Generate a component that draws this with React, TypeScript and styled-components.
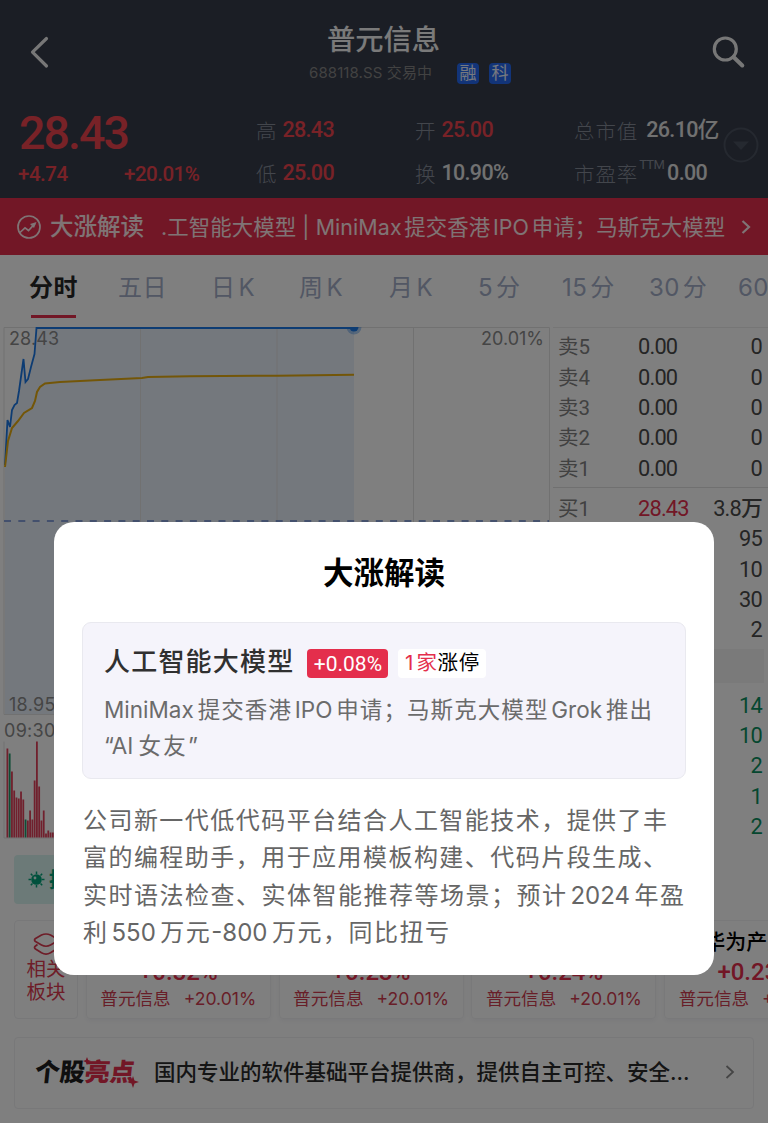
import React from 'react';
import styled, { createGlobalStyle, css } from 'styled-components';

const RED = '#e42e4c';
const GREEN = '#0a8f5e';

const GlobalStyle = createGlobalStyle`
  * { box-sizing: border-box; }
  body { margin: 0; background: #fff; }
  #root { font-family: Inter, 'Noto Sans CJK SC', sans-serif; }
`;

const Screen = styled.div`
  position: relative;
  width: 768px;
  height: 1124px;
  overflow: hidden;
  background: #fff;
  white-space: nowrap;
  text-autospace: normal;
`;

const Header = styled.header`
  height: 198px;
  background: #363c4a;
  color: #fff;
`;

const TitleBar = styled.div`
  display: flex;
  justify-content: space-between;
  height: 104px;
  padding: 0 22px 0 30px;
`;

const TitleIcon = styled.svg`
  flex: none;
  display: block;
  margin-top: 35px;
`;

const TitleBlock = styled.div`
  display: flex;
  flex-direction: column;
  align-items: center;
  padding-top: 20px;
  padding-left: 58px;
`;

const Title = styled.h1`
  margin: 0 53px 0 0;
  font-size: 28.3px;
  line-height: 40px;
  font-weight: 500;
  color: #f4f4f4;
`;

const SubTitle = styled.div`
  display: flex;
  align-items: center;
  height: 26px;
  font-size: 15px;
  line-height: 24px;
  color: #858585;
`;

const SubText = styled.span`
  width: 122px;
  margin-right: 26px;
  letter-spacing: 0.1px;
`;

const Tag = styled.span`
  width: 22px;
  height: 21px;
  margin-right: 10px;
  border-radius: 4px;
  background: #2468f2;
  color: #eef3ff;
  font-size: 17px;
  line-height: 20px;
  text-align: center;
  &:last-child { margin-right: 0; }
`;

const Quote = styled.section`
  display: grid;
  grid-template-columns: 237px 159px 159px 149px 1fr;
  padding-left: 19px;
  height: 94px;
`;

const digits = css`
  font-family: Roboto, 'Noto Sans CJK SC', sans-serif;
  font-weight: 500;
`;

const PriceCell = styled.div`
  ${digits}
  color: #f0444f;
`;

const Price = styled.div`
  margin-top: 1px;
  font-size: 46.5px;
  line-height: 56px;
  letter-spacing: -1.9px;
`;

const Change = styled.div`
  display: flex;
  margin-left: -1px;
  font-size: 20.5px;
  line-height: 26px;
  letter-spacing: -0.5px;
`;

const ChangeItem = styled.span<{ $w?: number }>`
  width: ${(p) => (p.$w ? p.$w + 'px' : 'auto')};
`;

const Facts = styled.div`
  display: flex;
  flex-direction: column;
`;

const Fact = styled.div<{ $tone?: string }>`
  ${digits}
  display: flex;
  align-items: center;
  height: 43.5px;
  padding-top: 8px;
  font-size: 21.5px;
  line-height: 26px;
  color: ${(p) => p.$tone || '#e2e2e2'};
  letter-spacing: -0.65px;
  text-autospace: no-autospace;
`;

const FactLabel = styled.span<{ $gap?: number }>`
  margin-right: ${(p) => p.$gap ?? 5}px;
  font-family: 'Noto Sans CJK SC', sans-serif;
  font-weight: 300;
  font-size: 20.5px;
  letter-spacing: 0.9px;
  color: #868c99;
`;

const Sup = styled.span`
  align-self: flex-start;
  margin: -4px 3px 0 -4px;
  font-size: 13px;
  font-weight: 400;
  letter-spacing: -0.7px;
  color: #868c99;
`;

const ExpandCell = styled.div`
  padding-top: 22px;
  svg { display: block; }
`;

const Banner = styled.div`
  display: flex;
  align-items: center;
  height: 57px;
  padding: 0 17px 0 17px;
  background: ${RED};
  color: #ffe8ea;
  line-height: 30px;
`;

const BannerTitle = styled.span`
  width: 111px;
  margin-left: 9px;
  font-size: 23.5px;
  font-weight: 500;
`;

const BannerText = styled.span`
  flex: 1;
  font-size: 21.4px;
  letter-spacing: 0.1px;
`;

const Tabs = styled.nav`
  display: flex;
  height: 72px;
  padding-left: 29px;
  overflow: hidden;
`;

const Tab = styled.div<{ $w: number; $active?: boolean }>`
  flex: none;
  width: ${(p) => p.$w}px;
  height: 63px;
  font-size: 24px;
  line-height: 65px;
  letter-spacing: 0.4px;
  color: ${(p) => (p.$active ? '#262626' : '#a4aec8')};
  font-weight: ${(p) => (p.$active ? 600 : 400)};
  &::after {
    content: '';
    display: ${(p) => (p.$active ? 'block' : 'none')};
    width: 45px;
    height: 3px;
    margin: -5px 0 0 2px;
    background: ${RED};
  }
`;

const Market = styled.section`
  display: flex;
  height: 519px;
`;

const ChartPane = styled.div`
  width: 553px;
  svg { display: block; }
`;

const Book = styled.div`
  flex: 1;
  border-top: 1px solid #ececec;
  padding: 4px 6px 0 5px;
`;

const BookRow = styled.div<{ $tone?: string }>`
  ${digits}
  display: grid;
  grid-template-columns: 80px 1fr auto;
  align-items: center;
  height: 30.35px;
  font-size: 21.8px;
  line-height: 30px;
  font-weight: 450;
  letter-spacing: -0.8px;
  color: ${(p) => p.$tone || '#4a4a4a'};
  text-autospace: no-autospace;
`;

const BookLabel = styled.span`
  color: #828282;
  font-size: 20.5px;
  font-weight: 400;
  letter-spacing: 0;
`;

const BookPrice = styled.span<{ $up?: boolean }>`
  color: ${(p) => (p.$up ? RED : 'inherit')};
`;

const BookSplit = styled.div`
  height: 1px;
  margin: 3px -6px 6px -5px;
  background: #e0e0e0;
`;

const BookStrip = styled.div`
  height: 34px;
  margin: 4px -2px 7px -5px;
  background: #f5f5f5;
`;

const TipBar = styled.div`
  display: flex;
  align-items: center;
  width: 640px;
  height: 49px;
  margin: 9px 0 0 14px;
  padding-left: 14px;
  gap: 4px;
  border-radius: 4px;
  background: #d9f5f0;
  color: #00a37a;
  font-size: 21px;
  line-height: 30px;
  font-weight: 700;
`;

const Plates = styled.section`
  display: flex;
  gap: 7.8px;
  margin: 16px 0 0 14px;
  overflow: hidden;
  height: 106px;
`;

const PlateLead = styled.div`
  flex: none;
  width: 64px;
  height: 99px;
  padding-top: 11px;
  border: 1px solid #f0f0f2;
  border-radius: 4px;
  text-align: center;
  font-size: 19.5px;
  line-height: 23px;
  color: #dc3a50;
  svg { display: block; margin: 0 auto 2px; }
`;

const Plate = styled.div`
  flex: none;
  display: flex;
  flex-direction: column;
  align-items: center;
  width: 185px;
  height: 99px;
  border: 1px solid #f2f2f5;
  border-radius: 4px;
  box-shadow: 0 2px 5px rgba(60, 60, 120, 0.06);
  color: ${RED};
`;

const PlateName = styled.div`
  height: 34px;
  padding-top: 6px;
  font-size: 21px;
  line-height: 30px;
  font-weight: 500;
  color: #000;
`;

const PlateRate = styled.div`
  ${digits}
  height: 33px;
  font-size: 24px;
  line-height: 34px;
`;

const PlateStock = styled.div`
  display: flex;
  gap: 13px;
  font-size: 17.6px;
  line-height: 22px;
  color: #d13d50;
`;

const Highlight = styled.section`
  display: flex;
  align-items: center;
  width: 740px;
  height: 72px;
  margin: 11px 0 0 14px;
  padding: 0 18px 2px 20px;
  border: 1px solid #f0f0f2;
  border-radius: 4px;
`;

const HighlightLogo = styled.div`
  position: relative;
  width: 119px;
  font-size: 25px;
  line-height: 36px;
  font-weight: 900;
  color: #1e1e1e;
  span {
    display: inline-block;
    transform: skewX(-6deg);
  }
  em { font-style: normal; color: ${RED}; }
  svg { position: absolute; left: 0; top: 0; }
`;

const HighlightText = styled.span`
  flex: 1;
  font-size: 21.5px;
  line-height: 30px;
  font-weight: 500;
  color: #2b2b2b;
`;

const Mask = styled.div`
  position: absolute;
  inset: 0 0 1px 0;
  background: rgba(0, 0, 0, 0.5);
`;

const Dialog = styled.div`
  position: absolute;
  left: 54px;
  top: 522px;
  width: 660px;
  height: 453px;
  padding: 0 28px;
  border-radius: 20px;
  background: #fff;
`;

const DialogTitle = styled.h2`
  margin: 0;
  padding-top: 29px;
  height: 100px;
  font-size: 30.5px;
  line-height: 44px;
  font-weight: 600;
  text-align: center;
  color: #000;
`;

const Topic = styled.div`
  height: 157px;
  padding: 21px 21px 0;
  border: 1px solid #e9e9ef;
  border-radius: 9px;
  background: #f5f4fb;
`;

const TopicHead = styled.div`
  display: flex;
  align-items: center;
  height: 38px;
  color: #303030;
  font-size: 26px;
  line-height: 34px;
  font-weight: 500;
  letter-spacing: 1.2px;
`;

const TopicName = styled.span`
  height: 36px;
`;

const Rate = styled.span`
  ${digits}
  width: 81px;
  height: 29px;
  margin: 0 10px 0 13px;
  border-radius: 4px;
  background: ${RED};
  color: #fff;
  font-size: 21px;
  font-weight: 450;
  line-height: 30px;
  letter-spacing: 0;
  text-align: center;
`;

const LimitUp = styled.span`
  width: 88px;
  height: 29px;
  border-radius: 4px;
  background: #fff;
  color: #000;
  font-size: 20.5px;
  font-weight: 400;
  line-height: 28px;
  letter-spacing: 0.6px;
  text-align: center;
  em { font-style: normal; color: ${RED}; }
`;

const TopicText = styled.div`
  margin-top: 10px;
  color: #6b6b6b;
`;

const Line = styled.div<{ $w: number; $size: number; $lh: number }>`
  width: ${(p) => p.$w}px;
  height: ${(p) => p.$lh}px;
  font-size: ${(p) => p.$size}px;
  line-height: ${(p) => p.$lh}px;
  white-space: normal;
  text-align: justify;
  text-align-last: justify;
`;

const Reason = styled.div`
  margin: 23px 0 0 1px;
  color: #666;
`;

const sells = ['卖5', '卖4', '卖3', '卖2', '卖1'];
const buys = ['95', '10', '30', '2'];
const deals = ['14', '10', '2', '1', '2'];
const tabs: [string, number][] = [
  ['分时', 89], ['五日', 93], ['日K', 88], ['周K', 90], ['月K', 89],
  ['5分', 84], ['15分', 87], ['30分', 89], ['60分', 80],
];
const plates = [
  { name: '', rate: '+0.32%' },
  { name: '', rate: '+0.23%' },
  { name: '', rate: '+0.24%' },
  { name: '华为产业链', rate: '+0.23%' },
];
/* height of each volume bar and whether it closed down */
const volumes: [number, boolean][] = [
  [89, false], [84, true], [66, false], [47, false], [40, false], [39, false], [46, false],
  [38, false], [18, true], [17, false], [27, false], [18, false], [57, false], [96, false],
  [51, false], [17, false], [27, false], [4, false], [7, false], [5, false], [5, false],
  [4, false], [6, false],
];

const TrendChart = () => (
  <svg width="553" height="519" viewBox="0 327 553 519">
    <path
      d="M5 467V465L7.500 420L10 427L12 410L14.500 405L17 403L19 391L23.500 359L25.500 382L28 379L31 367L34.500 354L36.500 328H354V714H5Z"
      fill="#8fb4e6" fillOpacity=".2"
    />
    <path d="M4 327.500H549.500V714.500H4ZM140.500 327V714M277 327V714M413.500 327V714M4 741.500V838H549.500V741.500" fill="none" stroke="#e2e2e2" />
    <path d="M4 521H549" stroke="#6686d0" strokeWidth="1.700" strokeDasharray="7 7.300" />
    <text x="9" y="344.500" fontSize="18" letterSpacing=".1" fill="#8a8a8a">28.43</text>
    <text x="544" y="344.500" fontSize="18" fill="#8a8a8a" textAnchor="end">20.01%</text>
    <text x="9" y="710.500" fontSize="18" letterSpacing=".3" fill="#8a8a8a">18.95</text>
    <text x="4" y="737" fontSize="18" letterSpacing=".3" fill="#8a8a8a">09:30</text>
    <path
      d="M5 465L7.500 420L10 427L12 410L14.500 405L17 403L19 391L23.500 359L25.500 382L28 379L31 367L34.500 354L36.500 328H354"
      fill="none" stroke="#1b78e6" strokeWidth="1.800"
    />
    <path
      d="M5 467L8 441L12 428L18 421L24 413L32 408L35 401L37 392L40 387L45 383.500L60 382L100 380L142 378L148 377L190 376.300L277 375.700L354 374.700"
      fill="none" stroke="#e6ac10" strokeWidth="2"
    />
    <clipPath id="plot"><rect x="4" y="327" width="546" height="390" /></clipPath>
    <g clipPath="url(#plot)" fill="#1b78e6">
      <circle cx="354" cy="327" r="7.500" fillOpacity=".35" />
      <circle cx="354" cy="327" r="4.500" />
    </g>
    {volumes.map(([h, down], i) => (
      <rect key={i} x={6.500 + i * 2.270} y={837.500 - h} width="1.800" height={h} fill={down ? '#1f9a6c' : '#e0405a'} />
    ))}
  </svg>
);

export default function App() {
  return (
    <Screen>
      <GlobalStyle />
      <Header>
        <TitleBar>
          <TitleIcon width="20" height="36" viewBox="0 0 20 36" fill="none" stroke="#efefef" strokeWidth="3.200" strokeLinecap="round" strokeLinejoin="round">
            <path d="M16.500 3.500L2.500 17.200L16.500 31" />
          </TitleIcon>
          <TitleBlock>
            <Title>普元信息</Title>
            <SubTitle>
              <SubText>688118.SS 交易中</SubText>
              <Tag>融</Tag>
              <Tag>科</Tag>
            </SubTitle>
          </TitleBlock>
          <TitleIcon width="34" height="36" viewBox="0 0 34 36" fill="none" stroke="#efefef" strokeWidth="3.200" strokeLinecap="round">
            <circle cx="13.300" cy="14" r="11" />
            <path d="M21.500 22L30.300 30.500" strokeWidth="4" />
          </TitleIcon>
        </TitleBar>
        <Quote>
          <PriceCell>
            <Price>28.43</Price>
            <Change>
              <ChangeItem $w={106}>+4.74</ChangeItem>
              <ChangeItem>+20.01%</ChangeItem>
            </Change>
          </PriceCell>
          <Facts>
            <Fact $tone="#f0444f"><FactLabel>高</FactLabel>28.43</Fact>
            <Fact $tone="#f0444f"><FactLabel>低</FactLabel>25.00</Fact>
          </Facts>
          <Facts>
            <Fact $tone="#f0444f"><FactLabel>开</FactLabel>25.00</Fact>
            <Fact><FactLabel>换</FactLabel>10.90%</Fact>
          </Facts>
          <Facts>
            <Fact><FactLabel $gap={8}>总市值</FactLabel>26.10亿</Fact>
            <Fact><FactLabel>市盈率</FactLabel><Sup>TTM</Sup>0.00</Fact>
          </Facts>
          <ExpandCell>
            <svg width="36" height="38" viewBox="0 0 36 38">
              <circle cx="18" cy="19" r="16.500" fill="none" stroke="#4b5260" strokeWidth="2" />
              <path d="M10 15.500H26L18 24Z" fill="#4b5260" />
            </svg>
          </ExpandCell>
        </Quote>
      </Header>

      <Banner>
        <svg width="24" height="24" viewBox="0 0 24 24" fill="none" stroke="#ffe8ea" strokeWidth="1.700">
          <circle cx="12" cy="12" r="11" />
          <path d="M3 17.500L8 12.800L11.500 15.500L18 8.500" />
          <path d="M13 9L19.500 7L17 13Z" fill="#ffe8ea" stroke="none" />
        </svg>
        <BannerTitle>大涨解读</BannerTitle>
        <BannerText>.工智能大模型 | MiniMax提交香港IPO申请；马斯克大模型</BannerText>
        <svg width="10" height="14" viewBox="0 0 10 14" fill="none" stroke="#ffe8ea" strokeWidth="2.200">
          <path d="M1.500 1L8 7L1.500 13" />
        </svg>
      </Banner>

      <Tabs>
        {tabs.map(([label, w], i) => (
          <Tab key={label} $w={w} $active={i === 0}>{label}</Tab>
        ))}
      </Tabs>

      <Market>
        <ChartPane><TrendChart /></ChartPane>
        <Book>
          {sells.map((s) => (
            <BookRow key={s}><BookLabel>{s}</BookLabel><BookPrice>0.00</BookPrice><span>0</span></BookRow>
          ))}
          <BookSplit />
          <BookRow><BookLabel>买1</BookLabel><BookPrice $up>28.43</BookPrice><span>3.8万</span></BookRow>
          {buys.map((b) => (
            <BookRow key={b}><span /><span /><span>{b}</span></BookRow>
          ))}
          <BookStrip />
          {deals.map((d, i) => (
            <BookRow key={i} $tone={GREEN}><span /><span /><span>{d}</span></BookRow>
          ))}
        </Book>
      </Market>

      <TipBar>
        <svg width="17" height="17" viewBox="0 0 17 17" fill="#00a37a" stroke="#00a37a" strokeWidth="1.500">
          <circle cx="8.500" cy="8.500" r="5.300" stroke="none" />
          <path d="M8.500 .5V3M8.500 14V16.500M.5 8.500H3M14 8.500H16.500M2.800 2.800L4.500 4.500M12.500 12.500L14.200 14.200M2.800 14.200L4.500 12.500M12.500 4.500L14.200 2.800" />
          <circle cx="7" cy="7" r="1.400" fill="#d9f5f0" stroke="none" />
        </svg>
        提示
      </TipBar>

      <Plates>
        <PlateLead>
          <svg width="28" height="24" viewBox="0 0 28 24" fill="none" stroke="#dc3a50" strokeWidth="1.700" strokeLinejoin="round">
            <path d="M9.500 3Q14 1 18.500 3L24.500 6.500Q26.500 8 24.500 9.500L18.500 13Q14 15.500 9.500 13L3.500 9.500Q1.500 8 3.500 6.500Z" />
            <path d="M5.500 12.500L3.500 14Q1.500 15.500 3.500 17L9.500 20.800Q14 23.500 18.500 20.800L24.500 17Q26.500 15.500 24.500 14L22.500 12.500" />
          </svg>
          相关<br />板块
        </PlateLead>
        {plates.map((p, i) => (
          <Plate key={i}>
            <PlateName>{p.name}</PlateName>
            <PlateRate>{p.rate}</PlateRate>
            <PlateStock><span>普元信息</span><span>+20.01%</span></PlateStock>
          </Plate>
        ))}
      </Plates>

      <Highlight>
        <HighlightLogo>
          <span>个股<em>亮点</em></span>
          <svg width="106" height="36" viewBox="0 0 106 36" fill={RED}>
            <path d="M52 3L53.200 6L56 7L53.200 8.200L52 11L50.800 8.200L48 7L50.800 6Z" />
            <path d="M98 22L99.500 26.500L104 28L99.500 29.500L98 34L96.500 29.500L92 28L96.500 26.500Z" />
          </svg>
        </HighlightLogo>
        <HighlightText>国内专业的软件基础平台提供商，提供自主可控、安全...</HighlightText>
        <svg width="10" height="14" viewBox="0 0 10 14" fill="none" stroke="#8a8a8a" strokeWidth="1.800">
          <path d="M1.500 1L8 7L1.500 13" />
        </svg>
      </Highlight>

      <Mask />
      <Dialog>
        <DialogTitle>大涨解读</DialogTitle>
        <Topic>
          <TopicHead>
            <TopicName>人工智能大模型</TopicName>
            <Rate>+0.08%</Rate>
            <LimitUp><em>1家</em>涨停</LimitUp>
          </TopicHead>
          <TopicText>
            <Line $w={548} $size={22.5} $lh={36}>MiniMax提交香港IPO申请；马斯克大模型Grok推出</Line>
            <Line $w={94} $size={22.5} $lh={36}>“AI女友”</Line>
          </TopicText>
        </Topic>
        <Reason>
          <Line $w={584} $size={24} $lh={37.4}>公司新一代低代码平台结合人工智能技术，提供了丰</Line>
          <Line $w={584} $size={24} $lh={37.4}>富的编程助手，用于应用模板构建、代码片段生成、</Line>
          <Line $w={601} $size={24} $lh={37.4}>实时语法检查、实体智能推荐等场景；预计2024年盈</Line>
          <Line $w={366} $size={24} $lh={37.4}>利550万元-800万元，同比扭亏</Line>
        </Reason>
      </Dialog>
    </Screen>
  );
}
